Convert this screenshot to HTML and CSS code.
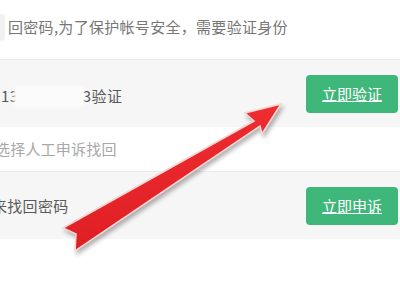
FILE: index.html
```html
<!DOCTYPE html>
<html lang="zh-CN">

<head>
    <meta charset="UTF-8">
    <meta name="viewport" content="width=device-width, initial-scale=1.0">
    <title>找回密码</title>
    <link rel="stylesheet" href="styles.css">
</head>

<body>
    <div class="page">
        <!-- 提示 -->
        <div class="notice">
            <span class="noticeIcon"></span>
            <span class="noticeText">回密码,为了保护帐号安全，需要验证身份</span>
        </div>
        <!-- 手机验证 -->
        <div class="row">
            <div class="rowText rowPhone">13<span class="mask"></span>3验证</div>
            <a class="btn">立即验证</a>
        </div>
        <div class="sub">选择人工申诉找回</div>
        <!-- 人工申诉 -->
        <div class="row">
            <div class="rowText rowAppeal">来找回密码</div>
            <a class="btn">立即申诉</a>
        </div>

        <!-- 红色箭头 -->
        <svg class="arrow" viewBox="0 0 400 300" width="400" height="300">
            <defs>
                <linearGradient id="red" x1="0" y1="0" x2="0.3" y2="1">
                    <stop offset="0" stop-color="#f53337" />
                    <stop offset="1" stop-color="#dc1d22" />
                </linearGradient>
            </defs>
            <polygon points="281,104 245,113 254,121 63,228 76,234 75,251 260,126 262,134"
                fill="url(#red)" stroke="#f9d6d2" stroke-width="1.6" stroke-linejoin="miter" />
        </svg>
    </div>
</body>

</html>
```

FILE: styles.css
```css
* {
    margin: 0;
    padding: 0;
    box-sizing: border-box;
}

body {
    background: #fff;
}

.page {
    width: 400px;
    height: 300px;
    position: relative;
    overflow: hidden;
    background: #fff;
    font-family: "Noto Sans CJK SC", "Liberation Sans", sans-serif;
    font-size: 15px;
    line-height: 20px;
}

.notice {
    height: 59px;
    display: flex;
    align-items: center;
    padding-bottom: 5px;
    color: #767676;
}

.noticeText {
    letter-spacing: 0.3px;
}

.noticeIcon {
    width: 5px;
    height: 27px;
    margin-right: 3px;
    background: #f1f1f1;
    border-radius: 0 4px 4px 0;
}

.row {
    height: 68px;
    display: flex;
    align-items: center;
    justify-content: space-between;
    padding-right: 2px;
    background: #f6f6f6;
    border-top: 1px solid #ebebeb;
}

.rowText {
    color: #5a5a5a;
    display: flex;
    align-items: center;
}

.rowPhone {
    padding-top: 5px;
    padding-left: 1px;
    letter-spacing: 0.5px;
}

.rowAppeal {
    margin-left: -8px;
    letter-spacing: 0.3px;
}

.mask {
    display: inline-block;
    width: 70px;
    height: 21px;
    margin: 0 -1px 0 -5px;
    background: #fbfbfb;
    border-radius: 3px;
    filter: blur(1px);
    position: relative;
}

.sub {
    height: 44px;
    display: flex;
    align-items: center;
    margin-left: -5px;
    color: #a8a8a8;
    letter-spacing: 0.2px;
}

.btn {
    width: 92px;
    height: 38px;
    display: flex;
    align-items: center;
    justify-content: center;
    background: #3fb77b;
    border-radius: 4px;
    color: #fff;
    text-decoration: underline;
    cursor: pointer;
}

.arrow {
    position: absolute;
    left: 0;
    top: 0;
    filter: drop-shadow(2px 3px 2px rgba(0, 0, 0, 0.3));
}
```
